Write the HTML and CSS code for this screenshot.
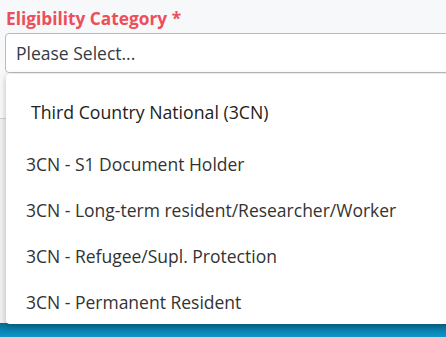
FILE: index.html
```html
<!DOCTYPE html>
<html>

<head>
    <meta http-equiv="content-type" content="text/html; charset=UTF-8">
    <title>Eligibility Category</title>
    <link rel="stylesheet" href="styles.css">
</head>

<body>
    <div class="page">
        <div class="field">
            <label class="caption">Eligibility Category *</label>
            <div class="select">Please Select...</div>
        </div>
        <div class="card"></div>
        <div class="footer"></div>

        <div class="dropdown">
            <div class="group">Third Country National (3CN)</div>
            <div class="option">3CN - S1 Document Holder</div>
            <div class="option">3CN - Long-term resident/Researcher/Worker</div>
            <div class="option">3CN - Refugee/Supl. Protection</div>
            <div class="option">3CN - Permanent Resident</div>
        </div>
    </div>
</body>

</html>
```

FILE: styles.css
```css
* {
    box-sizing: border-box;
}

body {
    margin: 0;
    background-color: #f7f8fa;
    font-family: "Open Sans", sans-serif;
    overflow: hidden;
}

.page {
    position: relative;
    height: 337px;
    display: flex;
    flex-direction: column;
}

.field {
    padding: 8px 0 0 5px;
}

.caption {
    display: block;
    color: #ec4f5a;
    font-weight: 700;
    font-size: 17.3px;
    line-height: 22px;
    margin: 0 0 3px 1px;
}

.select {
    height: 40px;
    margin-right: -10px;
    border: 1px solid #bbbbbb;
    border-radius: 4px;
    background-color: #ffffff;
    color: #333b45;
    font-size: 17.5px;
    line-height: 38px;
    padding-left: 10px;
}

.card {
    flex: 1;
    margin-top: 45px;
    border-top: 1px solid #d4d4d4;
    background-color: #f0f0f0;
}

.footer {
    height: 14px;
    background: linear-gradient(#076d94, #0c96cb);
}

.dropdown {
    position: absolute;
    left: 6px;
    right: -10px;
    top: 74px;
    height: 250px;
    background-color: #ffffff;
    border-radius: 4px;
    box-shadow: 0 2px 6px rgba(0, 0, 0, 0.25);
    padding-top: 15px;
}

.group {
    padding-left: 25px;
    margin-bottom: 6px;
    color: #222;
    font-size: 17.7px;
    line-height: 46px;
}

.option {
    padding-left: 20px;
    color: #333;
    font-size: 17.5px;
    line-height: 46px;
}
```
